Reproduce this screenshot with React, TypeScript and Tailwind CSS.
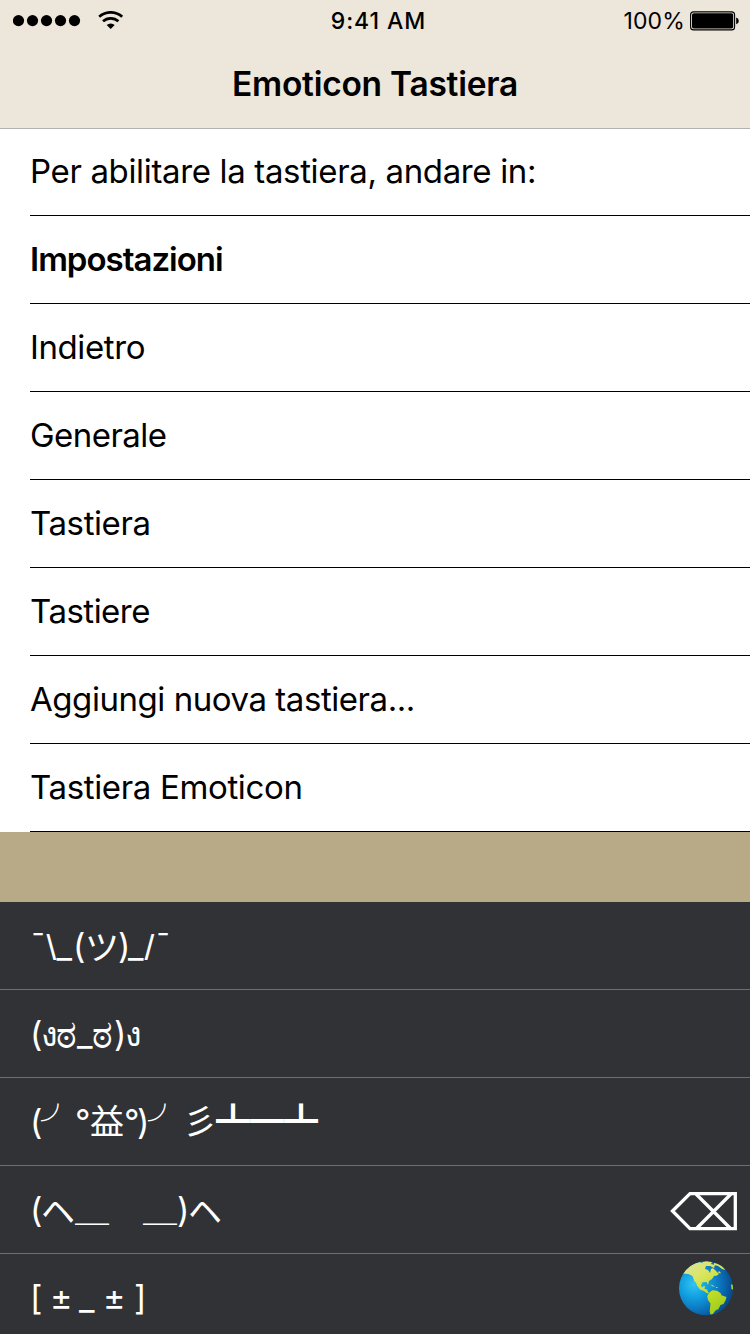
const instructions = [
  { text: 'Per abilitare la tastiera, andare in:', style: 'tracking-[-0.35px]' },
  { text: 'Impostazioni', style: 'font-semibold tracking-[-1px]' },
  { text: 'Indietro', style: 'tracking-[-0.4px]' },
  { text: 'Generale', style: 'tracking-[-0.55px]' },
  { text: 'Tastiera', style: 'tracking-[-0.4px]' },
  { text: 'Tastiere', style: 'tracking-[-0.5px]' },
  { text: 'Aggiungi nuova tastiera...', style: 'tracking-[-0.45px]' },
  { text: 'Tastiera Emoticon', style: 'tracking-[-0.35px]' },
];

const latin = 'font-[Inter,sans-serif] leading-[88px]';
const slash = "font-['Liberation_Sans',sans-serif] text-[35px] leading-[92px]";
const cjk = "font-['Noto_Sans_CJK_JP',sans-serif] leading-[87px]";
const cjkHigh = "font-['Noto_Sans_CJK_JP',sans-serif] leading-[84px]";
const cjkLine = "font-['Noto_Sans_CJK_JP',sans-serif] font-medium leading-[82px]";
const kannada = 'font-sans text-[39px] leading-[85px]';
const thai = 'font-sans font-medium leading-[86px]';

type Part = [text: string, style: string];

const emoticons: Part[][] = [
  [
    ['¯', `${latin} w-[16.5px]`],
    ['\\', `${slash} w-[10px]`],
    ['_', `${latin} w-[16.5px]`],
    ['(', `${latin} w-[12px]`],
    ['ツ', `${cjk} w-[33px]`],
    [')', `${latin} w-[10px]`],
    ['_', `${latin} w-[16.5px]`],
    ['/', `${slash} w-[10.5px]`],
    ['¯', `${latin} w-[16px]`],
  ],
  [
    ['(', `${latin} w-[11px]`],
    ['ง', `${thai} w-[15px]`],
    ['ಠ', `${kannada} w-[21px]`],
    ['_', `${latin} w-[15px]`],
    ['ಠ', `${kannada} w-[22px]`],
    [')', `${latin} w-[11px]`],
    ['ง', `${thai} w-[15px]`],
  ],
  [
    ['(', `${latin} w-[11px]`],
    ['╯', `${cjkHigh} w-[34px]`],
    ['°', `${latin} w-[15px]`],
    ['益', `${cjkHigh} w-[34px]`],
    ['°', `${latin} w-[13px]`],
    [')', `${latin} w-[11px]`],
    ['╯', `${cjkHigh} w-[35px]`],
    ['彡', `${cjkHigh} w-[33px]`],
    ['┻━┻', `${cjkHigh} w-[102px]`],
  ],
  [
    ['(', `${latin} w-[11px]`],
    ['ヘ', `${cjk} w-[34px]`],
    ['＿', `${cjkLine} w-[34px]`],
    ['　', `${cjk} w-[34px]`],
    ['＿', `${cjkLine} w-[34px]`],
    [')', `${latin} w-[11px]`],
    ['ヘ', `${cjk} w-[34px]`],
  ],
  [
    ['[', `${latin} w-[20px]`],
    ['±', `${latin} w-[29px]`],
    ['_', `${latin} w-[24px]`],
    ['±', `${latin} w-[31px]`],
    [']', `${latin} w-[14px]`],
  ],
];

function StatusBar() {
  return (
    <div className="grid h-10 grid-cols-3 items-center">
      <div className="flex items-center pl-[13px]">
        <svg width="68" height="12" viewBox="0 0 68 12">
          {[5.5, 19.5, 33.5, 47.5, 61.5].map((x) => (
            <circle key={x} cx={x} cy="5.6" r="5.6" />
          ))}
        </svg>
        <svg className="ml-[17px]" width="26" height="20" viewBox="0 0 26 20" fill="none" stroke="#000">
          <path d="M1.2 5.800a17 17 0 0 1 23 0" strokeWidth="2.7" />
          <path d="M5 10.300a11.400 11.400 0 0 1 15.400 0" strokeWidth="2.7" />
          <path d="M8.700 14a6 6 0 0 1 8 0l-4 4z" fill="#000" stroke="none" />
        </svg>
      </div>
      <div className="pt-px pl-[7px] text-center text-[23px] font-medium leading-10 tracking-[0.95px] whitespace-nowrap">9:41 AM</div>
      <div className="flex items-center justify-end pr-[10px]">
        <span className="pt-px text-[23px] leading-10 tracking-[0.15px]">100%</span>
        <svg className="ml-[5px]" width="50" height="20" viewBox="0 0 50 20">
          <rect x="0.6" y="0.9" width="44" height="18" rx="3" fill="none" stroke="#000" strokeWidth="1.1" />
          <rect x="2" y="2.300" width="41.200" height="15.200" rx="1.8" />
          <path d="M46.200 6.600q2.600.8 2.600 3.300t-2.600 3.300z" />
        </svg>
      </div>
    </div>
  );
}

function DeleteKey() {
  return (
    <svg className="absolute top-[290px] left-[670px]" width="68" height="40" viewBox="0 0 68 40" fill="none" stroke="#fff" strokeWidth="3.3">
      <path d="M2.500 19L20 1.700H65.300v35H20z" />
      <path d="M26 2l35 35M61 2L26 37" />
    </svg>
  );
}

function Globe() {
  return (
    <svg className="absolute top-[358px] left-[678px]" width="56" height="56" viewBox="0 0 56 56">
      <defs>
        <radialGradient id="ocean" cx="0.28" cy="0.42" r="0.72">
          <stop offset="0" stopColor="#32c4f2" />
          <stop offset="0.35" stopColor="#129fe0" />
          <stop offset="0.75" stopColor="#0a6ab4" />
          <stop offset="1" stopColor="#074a88" />
        </radialGradient>
        <linearGradient id="land" x1="10" y1="4" x2="46" y2="50" gradientUnits="userSpaceOnUse">
          <stop offset="0" stopColor="#d9e29a" />
          <stop offset="0.25" stopColor="#dce667" />
          <stop offset="0.6" stopColor="#c3df2a" />
          <stop offset="1" stopColor="#9ccb19" />
        </linearGradient>
        <clipPath id="disc"><circle cx="28" cy="28.300" r="27" /></clipPath>
      </defs>
      <circle cx="28" cy="28.300" r="27" fill="url(#ocean)" />
      <g clipPath="url(#disc)" fill="url(#land)">
        <path d="M5 13.500L9 8l6-4 6-2 6 1.500 1 2.500-1 3 3 1 2 3 1-4 2-1 3 3 3 3-2 1.500-3 .5-2 3-3 2-1 4-1.500-3-4 .3-1.500 3 1 2.200 2-1.500 1 .5-.5 2.500 2.500.5 1 2.500 2 1.500-3-.3-3-2.200-4-1.500-3-4-1-3-1.500-1-2-5.500-4-2z" />
        <path d="M24 2l5-1 5 1-1 2 4 1-1 3-4-2-4 0zM36 3l6 1 4 3 1 3-3-1-4-3-4-1zM32 24.500l3 .7 2 1.800-2.500-.7zM38 27h1.500v1H38zM41 11l2 2-1 .5-2-1z" />
        <path d="M32 32l2.500-1.800 4.500.5 3.500 2.300 1 2.200 5 1.800-1 3.500-2 3.500-3 1-2 4-3 1.500-3 4-2 0-.8-3 .8-8-2.500-3.500-.8-4zM53 24.500l3 .5-.5 5-2-1z" />
      </g>
    </svg>
  );
}

export default function App() {
  return (
    <div className="flex h-[1334px] w-[750px] flex-col overflow-hidden bg-[#b8a987] font-[Inter,sans-serif] text-black">
      <header className="h-[129px] shrink-0 border-b border-[#b2b2b2] bg-[#ede6da]">
        <StatusBar />
        <h1 className="text-center text-[33.500px] font-semibold leading-[89px] tracking-[-0.25px]">Emoticon Tastiera</h1>
      </header>
      <ul className="h-[703px] shrink-0 bg-white pl-[30px]">
        {instructions.map((row) => (
          <li key={row.text} className="h-[88px] border-b border-black text-[33px] leading-[86px] first:h-[87px] first:leading-[84px]">
            <span className={row.style}>{row.text}</span>
          </li>
        ))}
      </ul>
      <section className="relative mt-[70px] h-[432px] shrink-0 bg-[#313235] text-white">
        <ul>
          {emoticons.map((parts, i) => (
            <li key={i} className="flex h-[88px] border-b border-[#6d6e70] pl-[30px] text-[34px] whitespace-pre last:border-0">
              {parts.map(([text, style], j) => (
                <span key={j} className={`${style} h-[87px] shrink-0`}>{text}</span>
              ))}
            </li>
          ))}
        </ul>
        <DeleteKey />
        <Globe />
      </section>
    </div>
  );
}
